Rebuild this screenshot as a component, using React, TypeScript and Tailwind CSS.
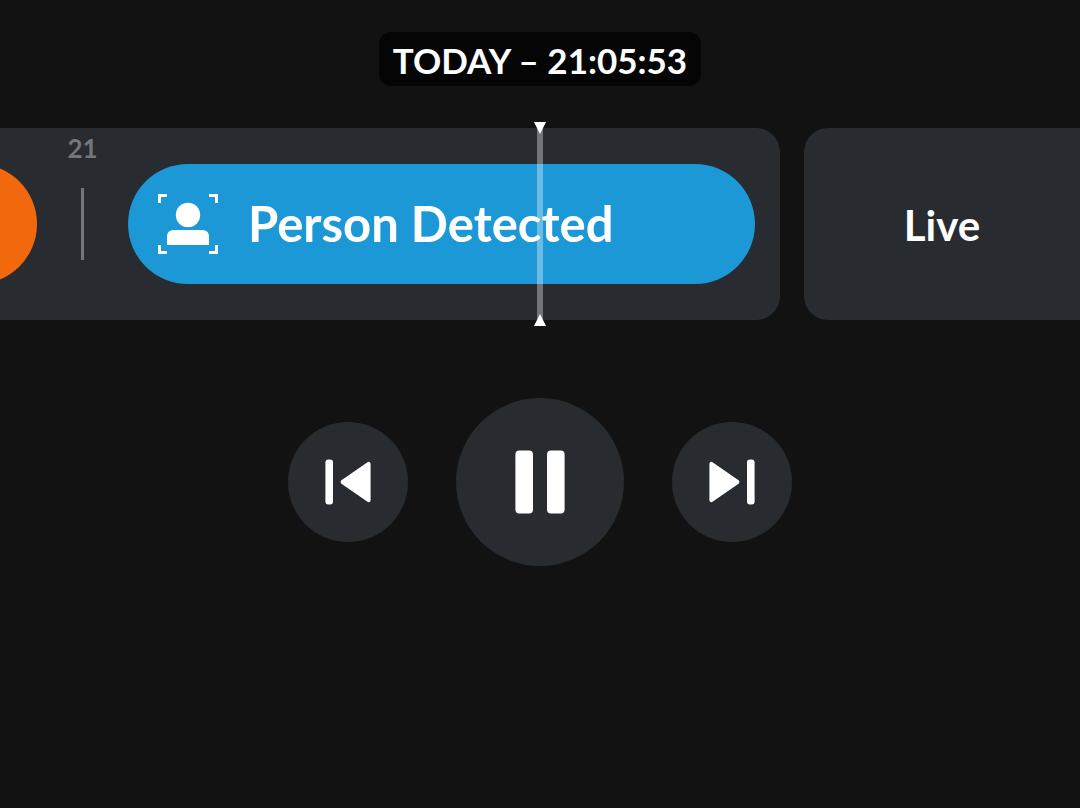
import { useState } from "react"

interface SkipIconProps {
  className?: string
}

const PersonIcon = () => (
  <svg viewBox="0 0 60 60" className="h-[60px] w-[60px] shrink-0" fill="#fff" aria-hidden="true">
    <path d="M0 0h9v3H3v6H0zM51 0h9v9h-3V3h-6zM0 51h3v6h6v3H0zM57 51h3v9h-9v-3h6z" />
    <circle cx="30" cy="21" r="12.2" />
    <path d="M9 51V42a6 6 0 0 1 6-6h30a6 6 0 0 1 6 6v9z" />
  </svg>
)

const PreviousIcon = ({ className = "" }: SkipIconProps) => (
  <svg viewBox="0 0 46 46" className={`h-[46px] w-[46px] ${className}`} fill="#fff" aria-hidden="true">
    <rect x="0.4" y="0.4" width="7.6" height="45.2" rx="3" />
    <path
      d="M43.6 4.8v36.4L17.6 23z"
      stroke="#fff"
      strokeWidth="4"
      strokeLinejoin="round"
    />
  </svg>
)

const PauseIcon = () => (
  <svg viewBox="0 0 50 64" className="h-16 w-[50px]" fill="#fff" aria-hidden="true">
    <rect x="0.4" y="0.4" width="17.6" height="63.2" rx="4" />
    <rect x="32" y="0.4" width="17.6" height="63.2" rx="4" />
  </svg>
)

const PlayIcon = () => (
  <svg viewBox="0 0 50 64" className="h-16 w-[50px]" fill="#fff" aria-hidden="true">
    <path d="M4 4v56l42-28z" stroke="#fff" strokeWidth="5" strokeLinejoin="round" />
  </svg>
)

const HourMarker = ({ hour }: { hour: string }) => (
  <div className="flex w-[91px] shrink-0 flex-col items-center pt-1.5 text-[#74767a]">
    <span className="h-[54px] text-[26px] leading-7 font-bold">{hour}</span>
    <span className="h-[72px] w-[3px] bg-current" />
  </div>
)

// Vertical line with an arrow head at each end, always at the middle of the window
const Playhead = () => (
  <div className="pointer-events-none absolute -inset-y-1.5 left-1/2 flex -translate-x-1/2 flex-col items-center">
    <div className="absolute inset-y-1.5 w-1.5 bg-white/35" />
    <svg viewBox="0 0 12 12" className="relative h-3 w-3" fill="#fff" aria-hidden="true">
      <path d="M0 0h12L6 12z" />
    </svg>
    <svg viewBox="0 0 12 12" className="relative mt-auto h-3 w-3" fill="#fff" aria-hidden="true">
      <path d="M0 12h12L6 0z" />
    </svg>
  </div>
)

const App = () => {
  const [isPlaying, setIsPlaying] = useState(true)

  return (
    <main className="min-h-screen overflow-hidden bg-[#121212] pt-8 font-['Lato','Liberation_Sans',sans-serif] text-white">
      <div className="flex justify-center">
        <time className="rounded-xl bg-[#050505] px-3.5 pt-1 pb-0.5 text-[35px] leading-[48px] font-bold">
          TODAY – 21:05:53
        </time>
      </div>

      {/* Timeline */}
      <section aria-label="Timeline" className="relative mt-[42px] flex h-48 gap-6">
        <div className="flex min-w-0 flex-1 justify-end overflow-hidden rounded-r-3xl bg-[#282b30] pr-[25px]">
          <button
            type="button"
            aria-label="Motion event"
            className="h-[120px] w-60 shrink-0 self-center rounded-full bg-[#f2690d]"
          />
          <HourMarker hour="21" />
          <button
            type="button"
            className="flex h-[120px] w-[627px] shrink-0 items-center gap-[30px] self-center rounded-full bg-[#1c98d7] pl-[30px]"
          >
            <PersonIcon />
            <span className="pb-0.5 text-[49px] leading-[60px] font-bold whitespace-nowrap">Person Detected</span>
          </button>
        </div>
        <button
          type="button"
          className="w-[276px] shrink-0 rounded-l-3xl bg-[#282b30] pt-0.5 text-[42px] leading-[48px] font-bold"
        >
          Live
        </button>
        <Playhead />
      </section>

      {/* Playback controls */}
      <div className="mt-[78px] flex items-center justify-center gap-12">
        <button
          type="button"
          aria-label="Previous event"
          className="flex h-[120px] w-[120px] items-center justify-center rounded-full bg-[#282b30]"
        >
          <PreviousIcon />
        </button>
        <button
          type="button"
          aria-label={isPlaying ? "Pause" : "Play"}
          onClick={() => setIsPlaying(!isPlaying)}
          className="flex h-[168px] w-[168px] items-center justify-center rounded-full bg-[#282b30]"
        >
          {isPlaying ? <PauseIcon /> : <PlayIcon />}
        </button>
        <button
          type="button"
          aria-label="Next event"
          className="flex h-[120px] w-[120px] items-center justify-center rounded-full bg-[#282b30]"
        >
          <PreviousIcon className="rotate-180" />
        </button>
      </div>
    </main>
  )
}

export default App
